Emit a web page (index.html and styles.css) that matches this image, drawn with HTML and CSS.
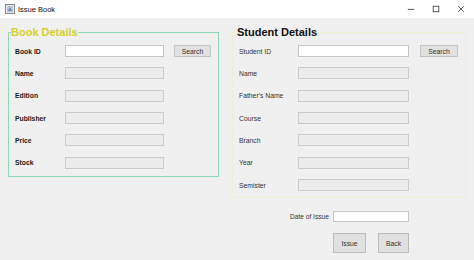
FILE: index.html
```html
<!DOCTYPE html>
<html>
<head>
<meta charset="utf-8">
<link rel="stylesheet" href="styles.css">
</head>
<body>
<div class="window">
  <div class="titlebar">
    <svg class="app-icon" width="10" height="10" viewBox="0 0 10 10">
      <rect x="0.5" y="0.5" width="9" height="9" fill="#e8e8e8" stroke="#8a8a8a"/>
      <rect x="2" y="2" width="6" height="6" fill="#b9c7d6"/>
      <path d="M3 7 L5 3 L7 7 Z" fill="#6f8fb0"/>
    </svg>
    <span class="title">Issue Book</span>
    <div class="controls">
      <svg width="10" height="10" viewBox="0 0 10 10"><path d="M1 5.5 H9" stroke="#333" stroke-width="1"/></svg>
      <svg width="10" height="10" viewBox="0 0 10 10"><rect x="1.5" y="1.5" width="7" height="7" fill="none" stroke="#333" stroke-width="1"/></svg>
      <svg width="10" height="10" viewBox="0 0 10 10"><path d="M1.5 1.5 L8.5 8.5 M8.5 1.5 L1.5 8.5" stroke="#333" stroke-width="1"/></svg>
    </div>
  </div>
  <div class="content">
    <div class="panels">
      <fieldset class="panel book">
        <legend class="legend book-legend">Book Details</legend>
        <div class="row"><span class="label bold">Book ID</span><span class="field edit"></span><span class="btn small">Search</span></div>
        <div class="row"><span class="label bold">Name</span><span class="field"></span></div>
        <div class="row"><span class="label bold">Edition</span><span class="field"></span></div>
        <div class="row"><span class="label bold">Publisher</span><span class="field"></span></div>
        <div class="row"><span class="label bold">Price</span><span class="field"></span></div>
        <div class="row"><span class="label bold">Stock</span><span class="field"></span></div>
      </fieldset>
      <fieldset class="panel student">
        <legend class="legend student-legend">Student Details</legend>
        <div class="row"><span class="label">Student ID</span><span class="field edit"></span><span class="btn small">Search</span></div>
        <div class="row"><span class="label">Name</span><span class="field"></span></div>
        <div class="row"><span class="label">Father's Name</span><span class="field"></span></div>
        <div class="row"><span class="label">Course</span><span class="field"></span></div>
        <div class="row"><span class="label">Branch</span><span class="field"></span></div>
        <div class="row"><span class="label">Year</span><span class="field"></span></div>
        <div class="row"><span class="label">Semister</span><span class="field"></span></div>
      </fieldset>
    </div>
    <div class="issue-area">
      <div class="date-row"><span class="date-label">Date of Issue</span><span class="field edit date-field"></span></div>
      <div class="actions"><span class="btn big issue">Issue</span><span class="btn big back">Back</span></div>
    </div>
  </div>
</div>
</body>
</html>
```

FILE: styles.css
```css
* { box-sizing: border-box; }
html, body { margin: 0; padding: 0; }
body {
  width: 474px;
  height: 260px;
  overflow: hidden;
  background: #f0f0f0;
  font-family: "Liberation Sans", Arial, sans-serif;
  color: #222;
}
.window { width: 474px; height: 260px; background: #f0f0f0; }
.titlebar {
  height: 18px;
  background: #ffffff;
  display: flex;
  align-items: center;
  padding-left: 5px;
}
.app-icon { display: block; }
.title {
  font-size: 7.5px;
  color: #111;
  margin-left: 3px;
}
.controls {
  margin-left: auto;
  display: flex;
  align-items: center;
  gap: 17px;
  padding-right: 9px;
}
.controls svg { display: block; width: 8px; height: 8px; }
.content { padding: 7px 0 0 8px; }
.panels { display: flex; align-items: flex-start; gap: 13px; }
.panel {
  margin: 0;
  min-width: 0;
  padding: 1px 7px 2px 6px;
}
.book { width: 211px; border: 1px solid #8fdab6; }
.student { width: 234px; border: 1px solid #efefd2; padding-bottom: 1px; }
.legend {
  padding: 0;
  font-weight: bold;
  font-size: 11px;
  line-height: 14px;
  height: 14px;
}
.book-legend { color: #d5d12b; margin-left: -4px; }
.student-legend { color: #111; margin-left: -2px; }
.row { display: flex; align-items: center; height: 22.33px; }
.label { font-size: 6.8px; color: #333; flex: none; }
.label.bold { font-weight: bold; color: #1a1a1a; }
.book .label { width: 50px; }
.student .label { width: 59px; }
.field {
  display: block;
  height: 12px;
  border: 1px solid #cbcbcb;
  background: #ececec;
  flex: none;
}
.field.edit { background: #ffffff; border-color: #c6c6c6; }
.book .field { width: 99px; }
.student .field { width: 111px; }
.btn {
  display: flex;
  align-items: center;
  justify-content: center;
  background: #e1e1e1;
  border: 1px solid #c4c4c4;
  font-size: 6.8px;
  color: #333;
  flex: none;
}
.btn.small { height: 12px; }
.book .btn.small { width: 37px; margin-left: 10px; }
.student .btn.small { width: 38px; margin-left: 11px; }
.issue-area { padding-left: 282px; }
.date-row { display: flex; align-items: center; margin-top: 13px; height: 11px; }
.date-label { width: 43px; font-size: 6.6px; color: #333; }
.date-field { width: 76px; height: 11px; }
.actions { display: flex; gap: 12px; margin-top: 11px; padding-left: 43px; }
.btn.big { height: 20px; border-color: #bcbcbc; }
.issue { width: 33px; }
.back { width: 31px; }
```
